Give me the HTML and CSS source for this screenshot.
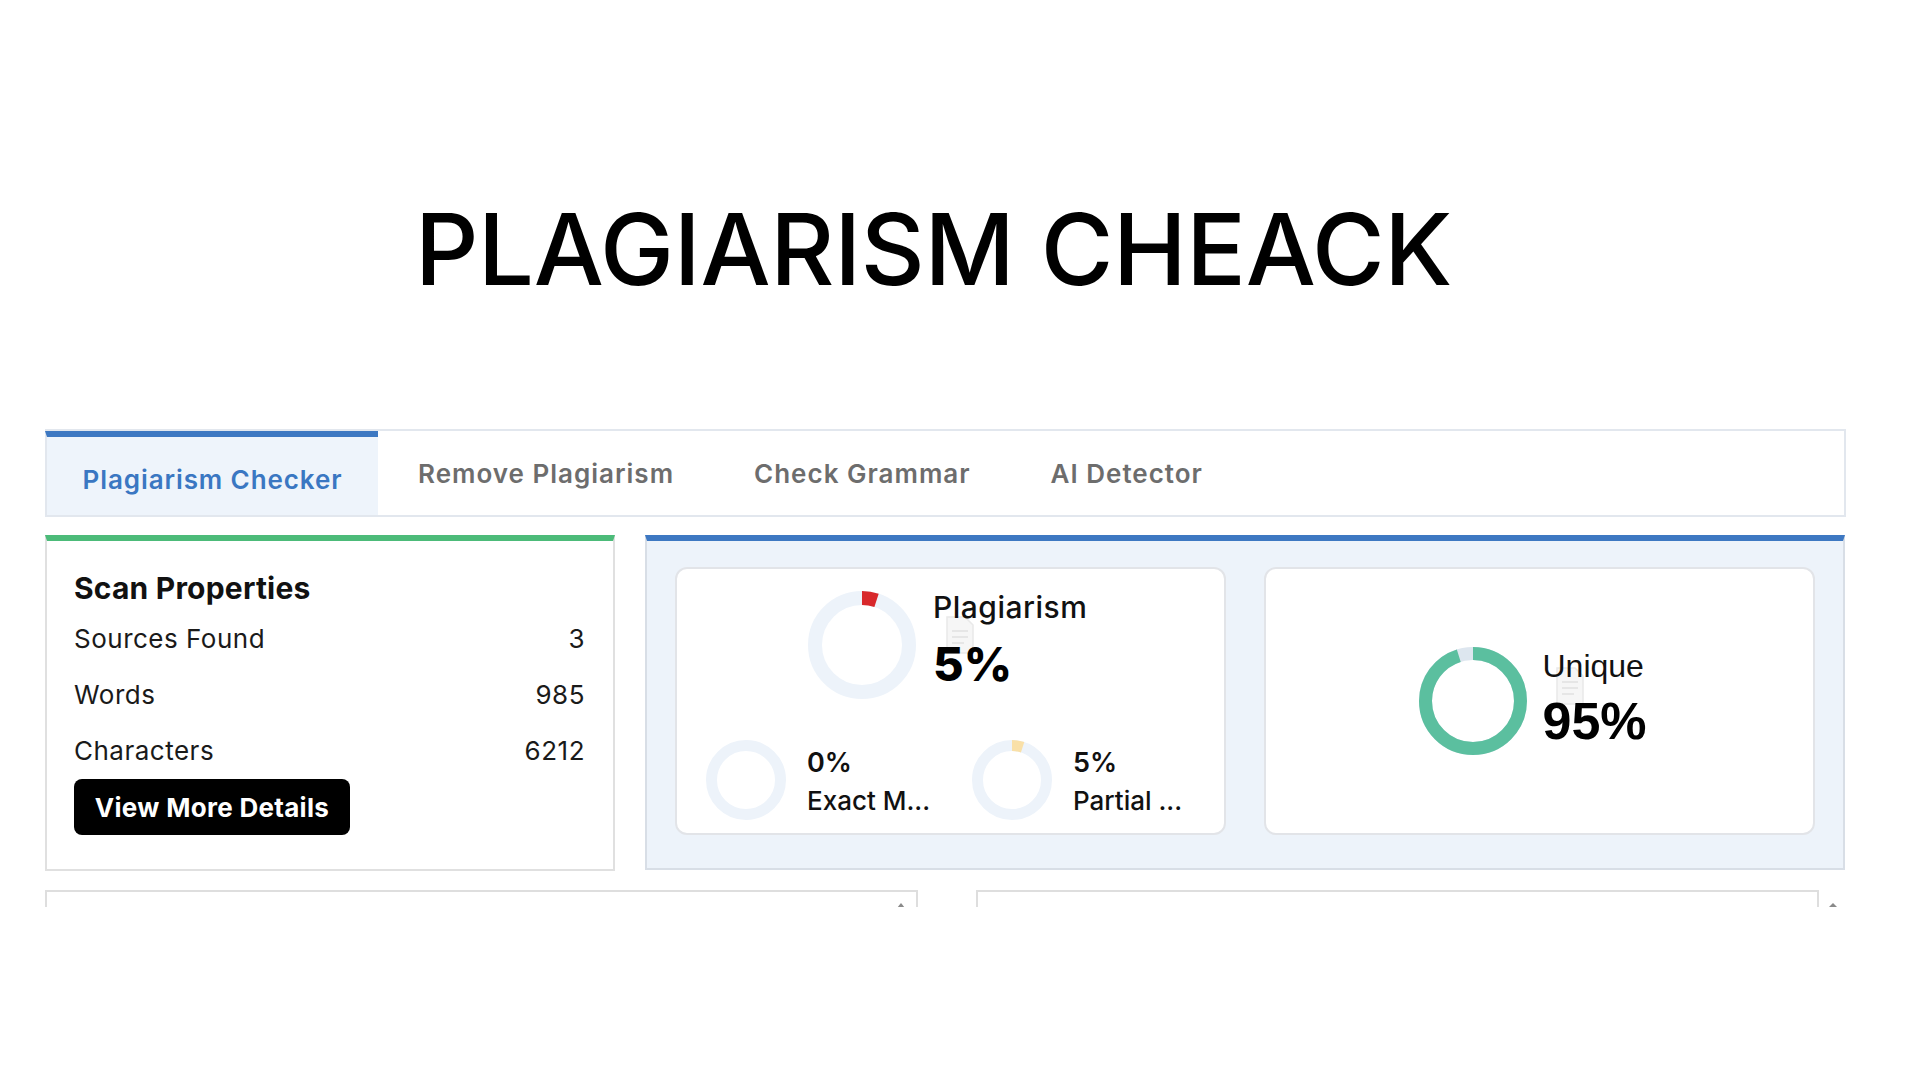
FILE: index.html
```html
<!DOCTYPE html>
<html lang="en">
<head>
    <meta charset="UTF-8">
    <meta name="viewport" content="width=device-width, initial-scale=1.0">
    <title>Plagiarism Cheack</title>
    <link rel="stylesheet" href="styles.css">
</head>
<body>
<h1 class="title">PLAGIARISM CHEACK</h1>

<div class="wrap">
    <nav class="tabs">
        <a class="tab active">Plagiarism Checker</a>
        <a class="tab">Remove Plagiarism</a>
        <a class="tab">Check Grammar</a>
        <a class="tab">AI Detector</a>
    </nav>

    <div class="results">
        <section class="scan-card">
            <h2>Scan Properties</h2>
            <div class="prop-row"><span>Sources Found</span><span>3</span></div>
            <div class="prop-row"><span>Words</span><span>985</span></div>
            <div class="prop-row"><span>Characters</span><span>6212</span></div>
            <button class="details-btn">View More Details</button>
        </section>

        <section class="score-panel">
            <div class="score-card">
                <div class="main-score">
                    <svg class="donut big" viewBox="0 0 108 108">
                        <circle cx="54" cy="54" r="47" fill="none" stroke="#edf3fa" stroke-width="14"/>
                        <circle cx="54" cy="54" r="47" fill="none" stroke="#d8282b" stroke-width="14"
                                stroke-dasharray="14.8 300" transform="rotate(-90 54 54)"/>
                    </svg>
                    <div class="score-text">
                        <svg class="doc-mark" viewBox="0 0 30 40"><path d="M2 2h18l8 8v28H2z" fill="#f4f4f4" stroke="#e4e4e4" stroke-width="1.5"/><path d="M7 16h16M7 22h16M7 28h12" stroke="#e0e0e0" stroke-width="2"/></svg>
                        <div class="score-label">Plagiarism</div>
                        <div class="score-value">5%</div>
                    </div>
                </div>
                <div class="sub-scores">
                    <div class="sub-score">
                        <svg class="donut small" viewBox="0 0 80 80">
                            <circle cx="40" cy="40" r="34.5" fill="none" stroke="#edf3fa" stroke-width="11"/>
                        </svg>
                        <div>
                            <div class="sub-value">0%</div>
                            <div class="sub-label">Exact M...</div>
                        </div>
                    </div>
                    <div class="sub-score">
                        <svg class="donut small" viewBox="0 0 80 80">
                            <circle cx="40" cy="40" r="34.5" fill="none" stroke="#edf3fa" stroke-width="11"/>
                            <circle cx="40" cy="40" r="34.5" fill="none" stroke="#f9e0a8" stroke-width="11"
                                    stroke-dasharray="10.8 300" transform="rotate(-90 40 40)"/>
                        </svg>
                        <div>
                            <div class="sub-value">5%</div>
                            <div class="sub-label">Partial ...</div>
                        </div>
                    </div>
                </div>
            </div>

            <div class="score-card unique-card">
                <svg class="donut big" viewBox="0 0 108 108">
                    <circle cx="54" cy="54" r="47.5" fill="none" stroke="#dde6ef" stroke-width="13"/>
                    <circle cx="54" cy="54" r="47.5" fill="none" stroke="#5bbf9f" stroke-width="13"
                            stroke-dasharray="283.5 300" transform="rotate(-90 54 54)"/>
                </svg>
                <div class="score-text">
                    <svg class="doc-mark" viewBox="0 0 30 40"><path d="M2 2h18l8 8v28H2z" fill="#f4f4f4" stroke="#e4e4e4" stroke-width="1.5"/><path d="M7 16h16M7 22h16M7 28h12" stroke="#e0e0e0" stroke-width="2"/></svg>
                    <div class="unique-label">Unique</div>
                    <div class="unique-value">95%</div>
                </div>
            </div>
        </section>
    </div>

    <div class="editors">
        <div class="editor"><span class="scroll-up"></span></div>
        <div class="editor right"><span class="scroll-up"></span></div>
    </div>
</div>
</body>
</html>
```

FILE: styles.css
```css
body {
    margin: 0;
    padding-top: 200px;
    background: white;
    font-family: Inter, "Noto Sans", sans-serif;
    color: #111;
}

.title {
    margin: 0;
    width: 1801px;
    margin-left: 33px;
    text-align: center;
    font-size: 99px;
    line-height: 1;
    font-weight: 500;
    letter-spacing: -0.3px;
    color: #000;
}

.wrap {
    width: 1801px;
    margin-left: 45px;
    margin-top: 130px;
}

/* tabs */
.tabs {
    display: flex;
    height: 84px;
    border: 2px solid #e2e7ee;
    border-left: none;
}
.tab {
    display: flex;
    align-items: center;
    padding: 0 40px;
    font-size: 26px;
    font-weight: 600;
    letter-spacing: 1px;
    color: #6d6d6d;
    cursor: pointer;
}
.tab.active {
    width: 333px;
    box-sizing: border-box;
    justify-content: center;
    padding: 0;
    padding-top: 6px;
    background: #eef4fb;
    border-top: 6px solid #3d78c2;
    border-left: 2px solid #e2e7ee;
    color: #3a77c2;
    letter-spacing: 0.9px;
}

/* results row */
.results {
    display: flex;
    gap: 30px;
    margin-top: 18px;
}

.scan-card {
    width: 570px;
    height: 336px;
    box-sizing: border-box;
    border: 2px solid #e0e0e0;
    border-top: 6px solid #4cbb79;
    padding: 27px 28px 0 27px;
}
.scan-card h2 {
    margin: 0 0 3px;
    font-size: 30px;
    line-height: 40px;
    font-weight: 700;
    letter-spacing: 0.2px;
    color: #111;
}
.prop-row {
    display: flex;
    justify-content: space-between;
    font-size: 26px;
    line-height: 56px;
    letter-spacing: 0.5px;
    color: #1a1a1a;
}
.details-btn {
    width: 276px;
    height: 56px;
    background: #000;
    color: white;
    border: none;
    border-radius: 8px;
    font-family: inherit;
    font-size: 26px;
    font-weight: 700;
    letter-spacing: 0.3px;
    cursor: pointer;
}

.score-panel {
    width: 1200px;
    height: 335px;
    box-sizing: border-box;
    background: #edf3fa;
    border: 2px solid #d8dee6;
    border-top: 6px solid #3d78c2;
    padding: 26px 28px 0 28px;
    display: flex;
    gap: 38px;
}
.score-card {
    width: 551px;
    height: 268px;
    box-sizing: border-box;
    background: white;
    border: 2px solid #e2e4e8;
    border-radius: 12px;
}

.main-score {
    display: flex;
    justify-content: center;
    gap: 17px;
    padding-top: 22px;
}
.donut.big {
    width: 108px;
    height: 108px;
    flex-shrink: 0;
}
.donut.small {
    width: 80px;
    height: 80px;
    flex-shrink: 0;
}
.score-text {
    position: relative;
    width: 160px;
}
.doc-mark {
    position: absolute;
    left: 12px;
    top: 24px;
    width: 30px;
    height: 40px;
    opacity: 0.8;
}
.score-label {
    position: relative;
    font-size: 30px;
    font-weight: 500;
    letter-spacing: 0.5px;
    line-height: 36px;
    margin-top: -2px;
}
.score-value {
    position: relative;
    margin-top: 13px;
    font-size: 47px;
    font-weight: 800;
    line-height: 52px;
    color: #000;
}

.sub-scores {
    display: flex;
    gap: 50px;
    padding-left: 29px;
    margin-top: 41px;
}
.sub-score {
    display: flex;
    gap: 21px;
    width: 216px;
    white-space: nowrap;
}
.sub-value {
    font-size: 27px;
    font-weight: 600;
    line-height: 36px;
    margin-top: 5px;
}
.sub-label {
    font-size: 26px;
    font-weight: 500;
    line-height: 40px;
}

.unique-card {
    display: flex;
    align-items: center;
    justify-content: center;
    gap: 16px;
    padding-right: 8px;
}
.unique-card .score-text {
    width: 110px;
    margin-top: -6px;
    font-family: "Liberation Sans", Arial, sans-serif;
}
.unique-card .doc-mark {
    top: 18px;
}
.unique-label {
    position: relative;
    font-size: 32px;
    line-height: 36px;
}
.unique-value {
    position: relative;
    margin-top: 9px;
    font-size: 52px;
    font-weight: 700;
    line-height: 56px;
    color: #000;
}

/* editors, cut off at the bottom */
.editors {
    display: flex;
    gap: 58px;
    margin-top: 19px;
}
.editor {
    position: relative;
    width: 873px;
    height: 17px;
    box-sizing: border-box;
    border: 2px solid #dedede;
    border-bottom: none;
}
.editor.right {
    width: 843px;
}
.scroll-up {
    position: absolute;
    right: 11px;
    top: 11px;
    border-left: 4px solid transparent;
    border-right: 4px solid transparent;
    border-bottom: 5px solid #8a8a8a;
}
.editor.right .scroll-up {
    right: -22px;
    border-left-width: 6px;
    border-right-width: 6px;
    border-bottom-width: 6px;
}
```
